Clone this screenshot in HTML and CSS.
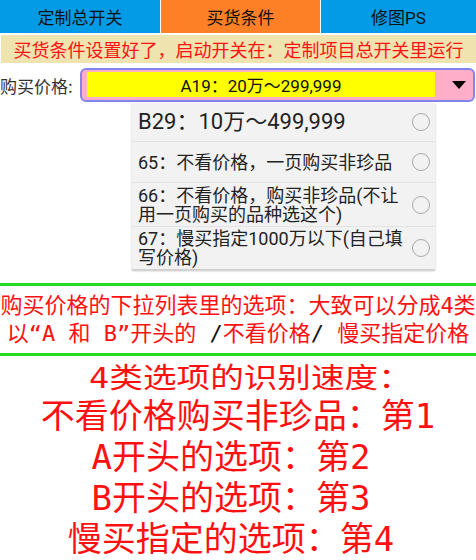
FILE: index.html
```html
<!DOCTYPE html>
<html lang="zh">
<head>
<meta charset="utf-8">
<title>买货条件</title>
<link rel="stylesheet" href="styles.css">
</head>
<body>
<div class="tabs">
  <div class="tab">定制总开关</div>
  <div class="tab tab-active">买货条件</div>
  <div class="tab">修图PS</div>
</div>
<div class="banner">买货条件设置好了，启动开关在：定制项目总开关里运行</div>
<div class="price-row">
  <div class="price-label">购买价格:</div>
  <div class="select">
    <div class="select-value">A19：20万～299,999</div>
    <div class="select-arrow"><span class="triangle"></span></div>
  </div>
</div>
<div class="dropdown">
  <div class="opt opt-first"><span class="opt-text opt-big">B29：10万～499,999</span><span class="radio"></span></div>
  <div class="opt"><span class="opt-text">65：不看价格，一页购买非珍品</span><span class="radio"></span></div>
  <div class="opt opt-two"><span class="opt-text">66：不看价格，购买非珍品(不让用一页购买的品种选这个)</span><span class="radio"></span></div>
  <div class="opt opt-last"><span class="opt-text">67：慢买指定1000万以下(自己填写价格)</span><span class="radio"></span></div>
</div>
<div class="note">
  <div class="note-line">购买价格的下拉列表里的选项：大致可以分成4类</div>
  <div class="note-line">以“A 和 B”开头的 <span class="slash">/</span>不看价格<span class="slash">/</span> 慢买指定价格</div>
</div>
<div class="speed">
  <div class="speed-title"><span class="speed-title-text">4类选项的识别速度：</span></div>
  <div class="speed-line">不看价格购买非珍品：第1</div>
  <div class="speed-line speed-shift">A开头的选项：第2</div>
  <div class="speed-line speed-shift">B开头的选项：第3</div>
  <div class="speed-line speed-shift">慢买指定的选项：第4</div>
</div>
</body>
</html>
```
FILE: styles.css
```css
html, body {
  margin: 0;
  padding: 0;
  overflow: hidden;
}
body {
  width: 476px;
  height: 560px;
  background: #ffffff;
  font-family: Roboto, "Noto Sans CJK SC", sans-serif;
  color: #111;
}
.tabs {
  display: grid;
  grid-template-columns: 160px 159px 1fr;
  column-gap: 1px;
  height: 33px;
  background: #ffffff;
}
.tab {
  background: #039be5;
  color: #111;
  font-size: 17px;
  display: flex;
  align-items: center;
  justify-content: center;
}
.tab-active {
  background: #fd7f26;
}
.banner {
  margin: 2px 0 0 1px;
  height: 28px;
  line-height: 28px;
  background: #efe4b0;
  color: #ff1111;
  font-size: 18px;
  text-align: center;
  font-family: "Noto Sans CJK SC", sans-serif;
}
.price-row {
  margin-top: 5px;
  display: flex;
  align-items: center;
}
.price-label {
  width: 80px;
  font-size: 17px;
  color: #333;
  font-family: "Noto Sans CJK SC", sans-serif;
}
.select {
  box-sizing: border-box;
  width: 395px;
  height: 34px;
  border: 2px solid #8383ee;
  border-radius: 6px;
  background: #ffaec9;
  padding: 2px 0 3px 5px;
  display: flex;
}
.select-value {
  width: 348px;
  background: #ffff00;
  font-size: 17px;
  color: #111;
  display: flex;
  align-items: center;
  justify-content: center;
}
.select-arrow {
  flex: 1;
  display: flex;
  align-items: center;
  justify-content: center;
  padding-left: 9px;
}
.triangle {
  width: 0;
  height: 0;
  border-left: 7px solid transparent;
  border-right: 7px solid transparent;
  border-top: 8px solid #000;
}
.dropdown {
  margin: 1px 0 0 132px;
  width: 303px;
  background: #f2f2f2;
  box-shadow: 0 1px 2px rgba(0, 0, 0, 0.25);
}
.opt {
  box-sizing: border-box;
  height: 41px;
  display: flex;
  align-items: center;
  padding: 0 5px 0 6px;
  gap: 7px;
  border-bottom: 1px solid #e3e3e3;
}
.opt-first { height: 39px; }
.opt-two { height: 44px; }
.opt-last { height: 43px; border-bottom: 1px solid #d0d0d0; }
.opt-text {
  flex: 1;
  font-size: 18px;
  line-height: 19px;
  color: #222;
}
.opt-big {
  font-size: 22px;
  line-height: 26px;
}
.radio {
  box-sizing: border-box;
  width: 18px;
  height: 18px;
  border: 1.5px solid #a9a9a9;
  border-radius: 50%;
  flex: none;
}
.note {
  margin-top: 13px;
  border-top: 3px solid #22dd22;
  border-bottom: 3px solid #22dd22;
  padding: 6px 0 5px;
  color: #ff1010;
  font-family: "DejaVu Sans Mono", "Noto Sans CJK SC", monospace;
  font-size: 22px;
  line-height: 28px;
  text-align: center;
  white-space: nowrap;
}
.slash {
  color: #111;
}
.speed {
  padding-top: 6px;
  color: #ff1010;
  font-family: "DejaVu Sans Mono", "Noto Sans CJK SC", monospace;
  text-align: center;
  white-space: nowrap;
}
.speed-title {
  height: 34px;
  line-height: 34px;
  font-size: 28px;
  padding-left: 24px;
}
.speed-title-text {
  display: inline-block;
  transform: scaleX(1.2);
}
.speed-line {
  font-size: 34px;
  line-height: 41px;
}
.speed-shift {
  padding-right: 14px;
}
```
